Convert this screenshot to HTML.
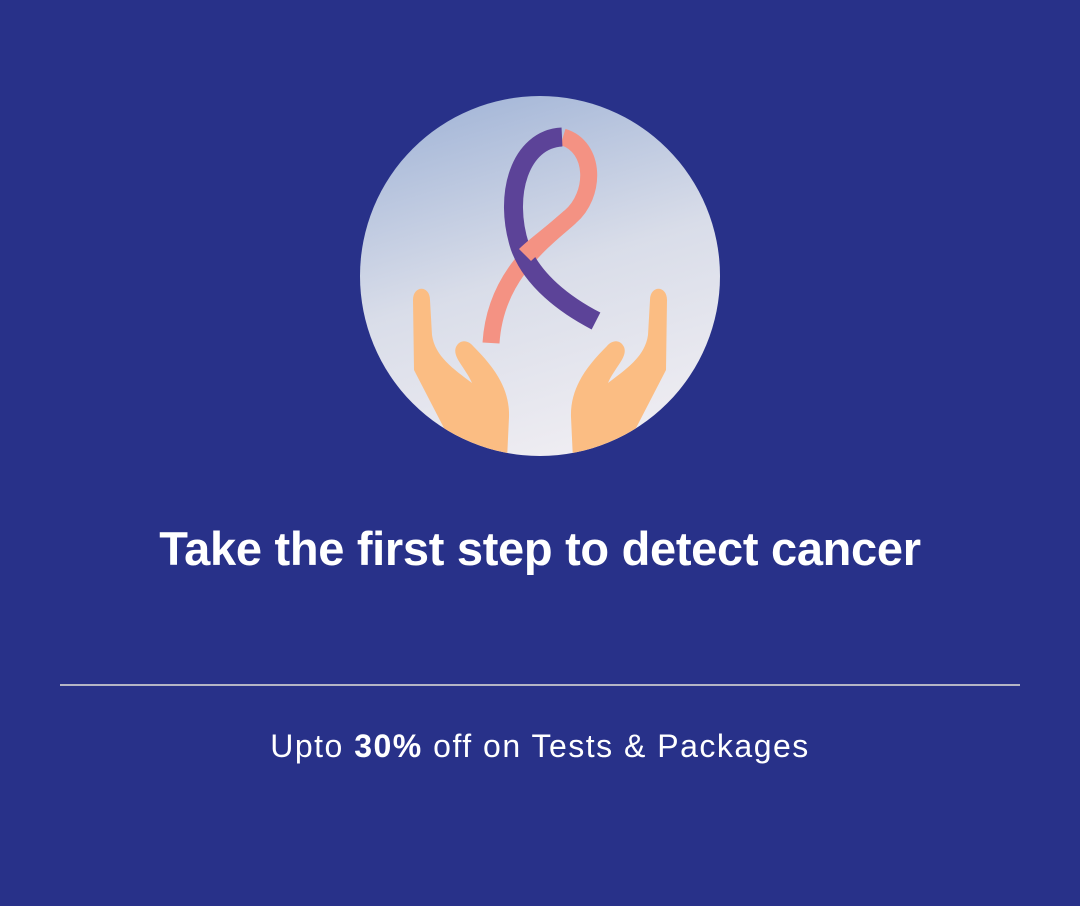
<!DOCTYPE html>
<html><head><meta charset="utf-8"><style>
html,body{margin:0;padding:0;width:1080px;height:906px;background:#283189;overflow:hidden;font-family:"Liberation Sans",sans-serif;color:#fff}
.t{position:absolute;left:0;width:1080px;text-align:center;white-space:nowrap}
</style></head><body>
<svg style="position:absolute;left:360px;top:95px" width="360" height="362" viewBox="0 0 360 362">
<defs>
<linearGradient id="g" x1="0.3" y1="0" x2="0.6" y2="1">
<stop offset="0" stop-color="#a5b7d8"/><stop offset="0.5" stop-color="#d9dde9"/><stop offset="1" stop-color="#efedf2"/>
</linearGradient>
<clipPath id="c"><circle cx="180" cy="181" r="180"/></clipPath>
</defs>
<circle cx="180" cy="181" r="180" fill="url(#g)"/>
<g clip-path="url(#c)">
<path d="M203,42 C236,52 236,100 210,122 C175,152 135,185 131,248" fill="none" stroke="#f49283" stroke-width="17"/>
<path d="M202,42 C160,44 143,100 160,152 C172,185 205,210 236,226" fill="none" stroke="#5c4398" stroke-width="19"/>
<path d="M210,122 C190,140 175,150 165,160" fill="none" stroke="#f49283" stroke-width="17"/>
<path id="h" d="M53,205 C53,190 70,190 70,205 L72,240 C75,262 95,275 112,288 C105,272 92,262 96,252 C100,244 108,245 113,251 C132,270 150,292 149,322 L147,365 L85,335 L54,275 Z" fill="#fbbd83"/>
<use href="#h" transform="translate(360,0) scale(-1,1)"/>
</g>
</svg>
<div class="t" style="top:521px;font-size:47px;font-weight:bold;letter-spacing:-0.3px">Take the first step to detect cancer</div>
<div style="position:absolute;left:60px;top:684px;width:960px;height:2px;background:#b5b5c5"></div>
<div class="t" style="top:728px;font-size:32px;letter-spacing:1.5px">Upto <b>30%</b> off on Tests &amp; Packages</div>
</body></html>
